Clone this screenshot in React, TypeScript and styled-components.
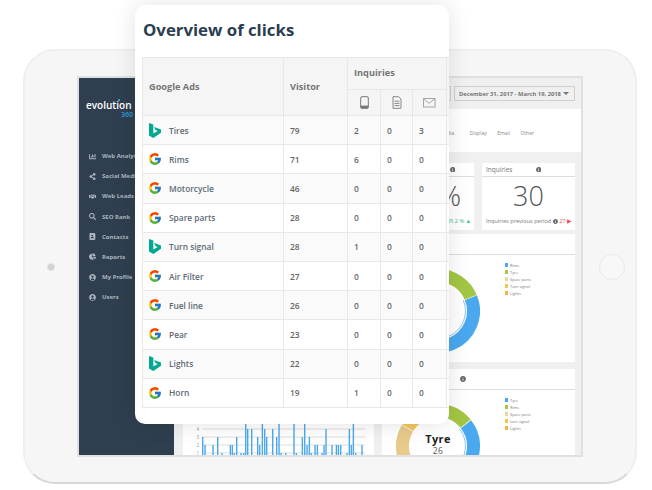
import React from 'react';
import styled, { createGlobalStyle } from 'styled-components';
import { FcGoogle } from 'react-icons/fc';
import {
  FaAddressBook,
  FaChartBar,
  FaChartPie,
  FaHandshake,
  FaInfoCircle,
  FaSearch,
  FaShareAlt,
  FaUserCircle,
} from 'react-icons/fa';

const menu = [
  { label: 'Web Analytics', icon: <FaChartBar /> },
  { label: 'Social Media', icon: <FaShareAlt /> },
  { label: 'Web Leads data', icon: <FaHandshake /> },
  { label: 'SEO Rank', icon: <FaSearch /> },
  { label: 'Contacts', icon: <FaAddressBook /> },
  { label: 'Reports', icon: <FaChartPie /> },
  { label: 'My Profile', icon: <FaUserCircle /> },
  { label: 'Users', icon: <FaUserCircle /> },
];

const rows = [
  { name: 'Tires', bing: true, visitor: 79, calls: 2, forms: 0, mails: 3 },
  { name: 'Rims', bing: false, visitor: 71, calls: 6, forms: 0, mails: 0 },
  { name: 'Motorcycle', bing: false, visitor: 46, calls: 0, forms: 0, mails: 0 },
  { name: 'Spare parts', bing: false, visitor: 28, calls: 0, forms: 0, mails: 0 },
  { name: 'Turn signal', bing: true, visitor: 28, calls: 1, forms: 0, mails: 0 },
  { name: 'Air Filter', bing: false, visitor: 27, calls: 0, forms: 0, mails: 0 },
  { name: 'Fuel line', bing: false, visitor: 26, calls: 0, forms: 0, mails: 0 },
  { name: 'Pear', bing: false, visitor: 23, calls: 0, forms: 0, mails: 0 },
  { name: 'Lights', bing: true, visitor: 22, calls: 0, forms: 0, mails: 0 },
  { name: 'Horn', bing: false, visitor: 19, calls: 1, forms: 0, mails: 0 },
];

// x is the bar position in the crop, h the value on the axis
const bars = [
  [217, 3], [224, 2], [248, 2], [262, 3], [275, 1], [293, 0.5], [300, 2], [306, 2],
  [312, 1], [319, 3], [332, 1], [340, 1], [346, 5], [352, 4], [364, 4], [382, 3],
  [388, 2], [396, 5], [403, 4], [409, 3], [427, 4], [433, 0.5], [439, 3], [446, 5],
  [452, 1], [466, 1], [491, 5], [498, 1], [516, 3], [523, 5], [530, 2], [537, 3],
  [543, 1], [554, 2], [561, 2], [575, 1], [581, 2], [587, 4], [605, 2], [618, 2],
  [624, 2], [631, 2], [650, 1], [657, 4], [663, 2], [669, 5], [676, 1], [695, 2],
];

const legendOne = [
  { label: 'Rims', color: '#4aa8ee' },
  { label: 'Tyre', color: '#a3c644' },
  { label: 'Spare parts', color: '#efd59b' },
  { label: 'Turn signal', color: '#f3c65a' },
  { label: 'Lights', color: '#f5b642' },
];

const legendTwo = [
  { label: 'Tyre', color: '#4aa8ee' },
  { label: 'Rims', color: '#a3c644' },
  { label: 'Spare parts', color: '#efd59b' },
  { label: 'turn signal', color: '#f3c93f' },
  { label: 'Lights', color: '#f5b642' },
];

const GlobalStyle = createGlobalStyle`
  html, body {
    margin: 0;
    background: #fff;
    font-family: "Open Sans", "Liberation Sans", sans-serif;
  }
`;

const Page = styled.div`
  position: relative;
  width: 652px;
  height: 490px;
  overflow: hidden;
  padding: 49px 15px 0 23px;
  box-sizing: border-box;
`;

const Tablet = styled.div`
  box-sizing: border-box;
  width: 614px;
  height: 435px;
  display: flex;
  align-items: center;
  padding-left: 22px;
  background: #f6f6f6;
  border: 2px solid #efefef;
  border-bottom-color: #d8d8d8;
  border-radius: 32px;
`;

const Camera = styled.div`
  box-sizing: border-box;
  width: 8px;
  height: 8px;
  border-radius: 50%;
  background: #d2d2d2;
  border: 1px solid #e2e2e2;
`;

const HomeButton = styled.div`
  box-sizing: border-box;
  width: 26px;
  height: 26px;
  margin-left: 16px;
  border-radius: 50%;
  background: #f8f8f8;
  border: 1px solid #e8e8e8;
`;

const Screen = styled.div`
  box-sizing: border-box;
  flex: 0 0 506px;
  height: 381px;
  margin-left: 22px;
  display: flex;
  overflow: hidden;
  border: 2px solid #e0e0e0;
  background: #f0f0f0;
`;

const Sidebar = styled.nav`
  flex: 0 0 95px;
  padding-top: 22px;
  background: #2f3f4f;
`;

const Logo = styled.div`
  position: relative;
  margin-left: 7px;
  width: 47px;
  height: 53px;
  color: #fff;
  font-size: 10px;
  font-weight: 600;
  line-height: 11px;
  white-space: nowrap;
`;

const LogoDot = styled.span`
  position: absolute;
  left: 32px;
  top: -1px;
  width: 2px;
  height: 2px;
  background: #2a9fd8;
`;

const LogoNumber = styled.div`
  color: #2a9fd8;
  font-size: 7px;
  line-height: 7px;
  text-align: right;
`;

const MenuList = styled.ul`
  list-style: none;
  margin: 0;
  padding: 0 0 0 10px;
  display: flex;
  flex-direction: column;
  gap: 14.2px;
`;

const MenuItem = styled.li`
  display: flex;
  align-items: center;
  gap: 6px;
  height: 6px;
  color: #a9b4bf;
  font-size: 6px;
  font-weight: 700;
  white-space: nowrap;

  svg {
    flex: 0 0 7px;
    width: 7px;
    height: 7px;
  }
`;

const Main = styled.main`
  flex: 1;
  min-width: 0;
  display: flex;
  flex-direction: column;
`;

const TopBar = styled.div`
  flex: 0 0 31px;
  display: flex;
  align-items: center;
  justify-content: flex-end;
  gap: 3px;
  padding-right: 6px;
  background: #f0f0f0;
`;

const RangeBox = styled.div`
  box-sizing: border-box;
  width: 30px;
  height: 15px;
  border: 1px solid #cfcfcf;
`;

const DatePicker = styled.div`
  box-sizing: border-box;
  width: 121px;
  height: 15px;
  display: flex;
  align-items: center;
  justify-content: space-between;
  padding: 0 5px 0 4px;
  border: 1px solid #cfcfcf;
  color: #777;
  font-size: 5.8px;
  font-weight: 700;
  white-space: nowrap;
`;

const Caret = styled.span`
  width: 0;
  height: 0;
  border-left: 3px solid transparent;
  border-right: 3px solid transparent;
  border-top: 3px solid #777;
`;

const TabBand = styled.div`
  flex: 0 0 43px;
  display: flex;
  align-items: center;
  justify-content: flex-end;
  gap: 10.5px;
  padding: 5px 47px 0 0;
  box-sizing: border-box;
  background: #fff;
  color: #888;
  font-size: 5px;
`;

const SocialTab = styled.span`
  margin-right: 5px;
`;

const Columns = styled.div`
  display: grid;
  grid-template-columns: 191px 193px;
  column-gap: 8px;
  padding: 11px 6px 0 9px;
`;

const Column = styled.div`
  display: flex;
  flex-direction: column;
  gap: 7px;
`;

const HiddenPanel = styled.div<{ $height: number }>`
  height: ${(p) => p.$height}px;
  background: #fff;
`;

const StatRow = styled.div`
  display: grid;
  grid-template-columns: 92px 93px;
  column-gap: 8px;
  margin-bottom: -3px;
`;

const StatCard = styled.div`
  box-sizing: border-box;
  height: 67px;
  display: flex;
  flex-direction: column;
  background: #fff;
  color: #777;
`;

const StatHead = styled.div<{ $right: number }>`
  box-sizing: border-box;
  height: 14px;
  display: flex;
  align-items: center;
  justify-content: space-between;
  padding: 0 ${(p) => p.$right}px 0 4px;
  border-bottom: 1px solid #ddd;
  font-size: 6.5px;
  svg {
    width: 5.5px;
    height: 5.5px;
    color: #666;
  }
`;

const StatValue = styled.div`
  flex: 1;
  text-align: center;
  color: #555;
  font-size: 27px;
  font-weight: 300;
  line-height: 38px;
  white-space: nowrap;
`;

const StatFoot = styled.div`
  display: flex;
  align-items: center;
  justify-content: space-between;
  padding: 0 3px 5px 4px;
  font-size: 5.6px;
  line-height: 7px;
  white-space: nowrap;
  svg {
    width: 5px;
    height: 5px;
    color: #666;
  }
`;

const Delta = styled.span<{ $color: string }>`
  color: ${(p) => p.$color};
`;

const Panel = styled.section`
  background: #fff;
`;

const PanelHead = styled.div`
  box-sizing: border-box;
  height: 21px;
  display: flex;
  align-items: center;
  padding-left: 78px;
  border-bottom: 1px solid #ddd;
  svg {
    width: 6px;
    height: 6px;
    color: #666;
  }
`;

const DonutBody = styled.div<{ $height: number }>`
  position: relative;
  height: ${(p) => p.$height}px;
  display: flex;
  align-items: flex-start;
  gap: 25px;
  padding: 14px 0 0 14px;
  box-sizing: border-box;
`;

const Legend = styled.ul`
  list-style: none;
  margin: -6px 0 0 -0.5px;
  padding: 0;
  display: flex;
  flex-direction: column;
  gap: 3px;
`;

const LegendItem = styled.li`
  display: flex;
  align-items: center;
  gap: 2px;
  height: 4px;
  color: #777;
  font-size: 3.9px;
  white-space: nowrap;
`;

const Swatch = styled.span<{ $color: string }>`
  width: 3.5px;
  height: 3.5px;
  background: ${(p) => p.$color};
`;

const DonutLabel = styled.div`
  position: absolute;
  left: 14px;
  top: 42px;
  width: 84px;
  text-align: center;
  color: #222;
  font-size: 11px;
  font-weight: 700;
  line-height: 13px;
  letter-spacing: 0.4px;
`;

const DonutCount = styled.div`
  color: #555;
  font-size: 8.5px;
  font-weight: 400;
  line-height: 11px;
`;

const ChartBody = styled.div`
  padding-top: 10px;
`;

const Card = styled.div`
  position: absolute;
  left: 135px;
  top: 5px;
  width: 314px;
  height: 419px;
  padding-left: 7px;
  box-sizing: border-box;
  overflow: hidden;
  background: #fff;
  border-radius: 10px;
  box-shadow: 0 0 22px rgba(0, 0, 0, 0.12);
`;

const Title = styled.h2`
  margin: 0;
  height: 52px;
  padding-left: 1px;
  color: #2b3d50;
  font-size: 16.8px;
  font-weight: 700;
  line-height: 50px;
  white-space: nowrap;
`;

const Table = styled.table`
  width: 312px;
  table-layout: fixed;
  border-collapse: collapse;
  color: #666;
  font-size: 8.4px;
  font-weight: 600;
`;

const HeadCell = styled.th`
  padding: 0 6px;
  background: #f5f5f5;
  border: 1px solid #e8e8e8;
  color: #757575;
  font-size: 9.2px;
  font-weight: 700;
  text-align: left;
`;

const GroupCell = styled(HeadCell)`
  height: 28px;
  padding-bottom: 3px;
`;

const IconCell = styled(HeadCell)`
  height: 25px;
  padding: 0;
  text-align: center;
  svg {
    display: block;
    margin: 0 auto;
  }
`;

const Row = styled.tr`
  height: 29.2px;
  &:nth-child(odd) {
    background: #fafafa;
  }
`;

const Cell = styled.td`
  padding: 0 6px;
  border: 1px solid #e8e8e8;
`;

const SourceName = styled.div`
  display: flex;
  align-items: center;
  gap: 8px;
  color: #606a74;
  white-space: nowrap;
  > svg {
    flex: none;
  }
`;

const GoogleMark = styled(FcGoogle)`
  width: 14px;
  height: 14px;
  margin: 0 -1px;
`;

function BingIcon() {
  return (
    <svg width="12" height="15" viewBox="1.5 0 12.5 15.5" aria-hidden="true">
      <path fill="#00a98f" d="M1.5 0 6 1.5V11l4.6-2.6-2.4-1.1-1.4-3.2 7.2 2.5v3.6L6 15.5l-4.5-2.6z" />
    </svg>
  );
}

function PhoneIcon() {
  return (
    <svg width="9" height="13" viewBox="0 0 9 13" aria-hidden="true">
      <rect x="0.7" y="0.7" width="7.6" height="11.6" rx="1.2" fill="none" stroke="#777" />
      <rect x="0.7" y="9.6" width="7.6" height="2.7" fill="#777" />
    </svg>
  );
}

function FormIcon() {
  return (
    <svg width="10" height="13" viewBox="0 0 10 13" aria-hidden="true">
      <path fill="none" stroke="#888" d="M1 .7h5.5L9 3v9.3H1z" />
      <path stroke="#888" d="M2.5 5.2h5M2.5 7.4h5M2.5 9.6h5" />
    </svg>
  );
}

function MailIcon() {
  return (
    <svg width="13" height="10" viewBox="0 0 13 10" aria-hidden="true">
      <rect x="0.5" y="0.5" width="11.5" height="8.5" fill="none" stroke="#a5a5a5" />
      <path fill="none" stroke="#a5a5a5" d="m.7.7 5.5 4.6L11.8.7" />
    </svg>
  );
}

// angles are clockwise from twelve o'clock
function Donut({ split }: { split: number }) {
  const r = 35.5;
  const length = 2 * Math.PI * r;
  const arc = (from: number, to: number, color: string) => (
    <circle
      cx="42"
      cy="42"
      r={r}
      fill="none"
      stroke={color}
      strokeWidth="13"
      strokeDasharray={`${((to - from) / 360) * length} ${length}`}
      transform={`rotate(${from - 90} 42 42)`}
    />
  );
  return (
    <svg width="84" height="84" viewBox="0 0 84 84" aria-hidden="true">
      {arc(split + 1, 188, '#4aa8ee')}
      {arc(2, split, '#a3c644')}
      {arc(190, 300, '#e8ca8b')}
      {arc(301, 330, '#f3c65a')}
      {arc(331, 360, '#f5b642')}
      <circle cx="42" cy="42" r="27.5" fill="none" stroke="#4aa8ee" strokeWidth="0.6" strokeDasharray="60 200" transform={`rotate(${split - 90} 42 42)`} />
    </svg>
  );
}

function BarChart() {
  return (
    <svg width="191" height="80" viewBox="0 0 191 80" aria-hidden="true">
      {[4, 3, 2, 1].map((n, i) => (
        <g key={n}>
          <line x1="19" x2="182" y1={34 + i * 8} y2={34 + i * 8} stroke="#ddd" />
          <text x="16" y={36 + i * 8} fontSize="4.5" fill="#999" textAnchor="end">
            {n}
          </text>
        </g>
      ))}
      {bars.map(([x, h]) => (
        <rect key={x} x={(x - 1) / 3 - 53} y={66 - h * 8} width="1.4" height={h * 8} fill="#4aa8ee" />
      ))}
    </svg>
  );
}

export default function App() {
  return (
    <Page>
      <GlobalStyle />
      <Tablet>
        <Camera />
        <Screen>
          <Sidebar>
            <Logo>
              <LogoDot />
              evolution
              <LogoNumber>360</LogoNumber>
            </Logo>
            <MenuList>
              {menu.map((item) => (
                <MenuItem key={item.label}>
                  {item.icon}
                  {item.label}
                </MenuItem>
              ))}
            </MenuList>
          </Sidebar>
          <Main>
            <TopBar>
              <RangeBox />
              <DatePicker>
                December 31, 2017 - March 19, 2018
                <Caret />
              </DatePicker>
            </TopBar>
            <TabBand>
              <SocialTab>Social Media</SocialTab>
              <span>Display</span>
              <span>Email</span>
              <span>Other</span>
            </TabBand>
            <Columns>
              <Column>
                <HiddenPanel $height={194} />
                <Panel>
                  <PanelHead />
                  <ChartBody>
                    <BarChart />
                  </ChartBody>
                </Panel>
              </Column>
              <Column>
                <StatRow>
                  <StatCard>
                    <StatHead $right={19}>
                      Click rate
                      <FaInfoCircle />
                    </StatHead>
                    <StatValue>2.5 %</StatValue>
                    <StatFoot>
                      <span />
                      <Delta $color="#3dbb94">45.2 % ▲</Delta>
                    </StatFoot>
                  </StatCard>
                  <StatCard>
                    <StatHead $right={34}>
                      Inquiries
                      <FaInfoCircle />
                    </StatHead>
                    <StatValue>30</StatValue>
                    <StatFoot>
                      Inquiries previous period
                      <FaInfoCircle />
                      <Delta $color="#ef5350">27 ▶</Delta>
                    </StatFoot>
                  </StatCard>
                </StatRow>
                <Panel>
                  <PanelHead />
                  <DonutBody $height={107}>
                    <Donut split={67} />
                    <Legend>
                      {legendOne.map((item) => (
                        <LegendItem key={item.label}>
                          <Swatch $color={item.color} />
                          {item.label}
                        </LegendItem>
                      ))}
                    </Legend>
                  </DonutBody>
                </Panel>
                <Panel>
                  <PanelHead>
                    <FaInfoCircle />
                  </PanelHead>
                  <DonutBody $height={107}>
                    <Donut split={51} />
                    <Legend>
                      {legendTwo.map((item) => (
                        <LegendItem key={item.label}>
                          <Swatch $color={item.color} />
                          {item.label}
                        </LegendItem>
                      ))}
                    </Legend>
                    <DonutLabel>
                      Tyre
                      <DonutCount>26</DonutCount>
                    </DonutLabel>
                  </DonutBody>
                </Panel>
              </Column>
            </Columns>
          </Main>
        </Screen>
        <HomeButton />
      </Tablet>
      <Card>
        <Title>Overview of clicks</Title>
        <Table>
          <colgroup>
            <col width="141" />
            <col width="64" />
            <col width="33" />
            <col width="32" />
            <col width="34" />
            <col width="8" />
          </colgroup>
          <thead>
            <tr>
              <HeadCell rowSpan={2}>Google Ads</HeadCell>
              <HeadCell rowSpan={2}>Visitor</HeadCell>
              <GroupCell colSpan={3}>Inquiries</GroupCell>
              <HeadCell rowSpan={2} />
            </tr>
            <tr>
              <IconCell>
                <PhoneIcon />
              </IconCell>
              <IconCell>
                <FormIcon />
              </IconCell>
              <IconCell>
                <MailIcon />
              </IconCell>
            </tr>
          </thead>
          <tbody>
            {rows.map((row) => (
              <Row key={row.name}>
                <Cell>
                  <SourceName>
                    {row.bing ? <BingIcon /> : <GoogleMark />}
                    {row.name}
                  </SourceName>
                </Cell>
                <Cell>{row.visitor}</Cell>
                <Cell>{row.calls}</Cell>
                <Cell>{row.forms}</Cell>
                <Cell>{row.mails}</Cell>
                <Cell />
              </Row>
            ))}
          </tbody>
        </Table>
      </Card>
    </Page>
  );
}
